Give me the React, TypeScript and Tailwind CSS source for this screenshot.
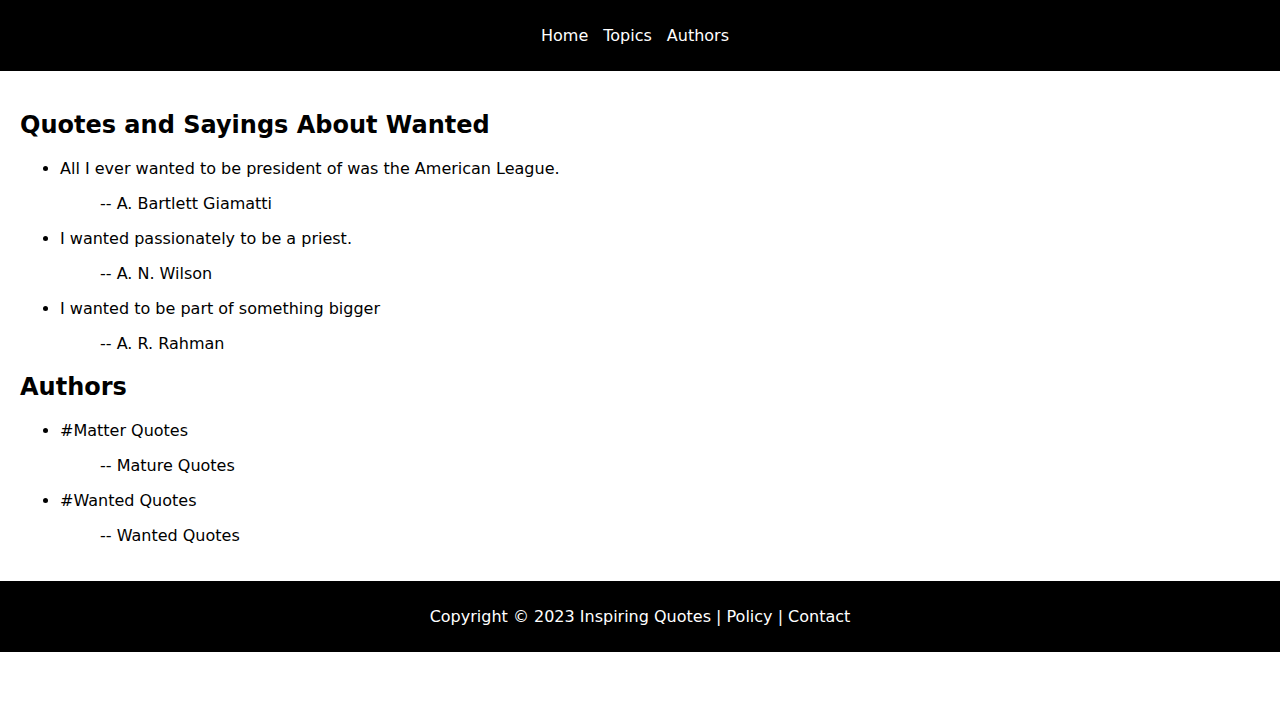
import React from "react";

const quotes = [
  { q: "All I ever wanted to be president of was the American League.", a: "A. Bartlett Giamatti" },
  { q: "I wanted passionately to be a priest.", a: "A. N. Wilson" },
  { q: "I wanted to be part of something bigger", a: "A. R. Rahman" },
];

const authors = [
  { q: "#Matter Quotes", a: "Mature Quotes" },
  { q: "#Wanted Quotes", a: "Wanted Quotes" },
];

function List({ items }: { items: { q: string; a: string }[] }) {
  return (
    <ul className="list-disc pl-[40px] my-[16px]">
      {items.map((it, i) => (
        <li key={i}>
          <p className="my-[16px]">{it.q}</p>
          <p className="my-[16px] ml-[40px]">-- {it.a}</p>
        </li>
      ))}
    </ul>
  );
}

export default function App() {
  return (
    <div
      className="bg-white text-black text-[16px] leading-[19px]"
      style={{ fontFamily: '"DejaVu Sans", sans-serif' }}
    >
      <header className="h-[71px] bg-black flex items-center justify-center text-white">
        <nav className="flex gap-[15px] pr-[10px]">
          <a>Home</a>
          <a>Topics</a>
          <a>Authors</a>
        </nav>
      </header>
      <main className="p-[20px]">
        <h2 className="text-[24px] leading-[28px] font-bold my-[19.92px]">
          Quotes and Sayings About Wanted
        </h2>
        <List items={quotes} />
        <h2 className="text-[24px] leading-[28px] font-bold my-[19.92px]">Authors</h2>
        <List items={authors} />
      </main>
      <footer className="h-[71px] bg-black flex items-center justify-center text-white">
        Copyright © 2023 Inspiring Quotes | Policy | Contact
      </footer>
    </div>
  );
}
